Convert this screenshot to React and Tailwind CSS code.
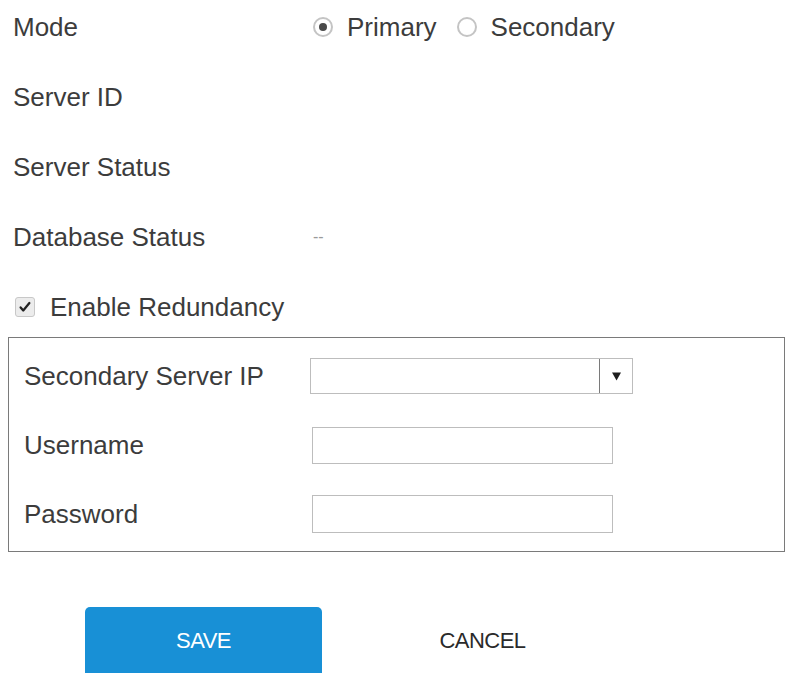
const Radio = ({ checked, label }) => (
  <label className="flex items-center gap-[14px]">
    <span className="flex h-[20px] w-[20px] items-center justify-center rounded-full border-[2px] border-[#c4c4c4] bg-white">
      {checked && <span className="h-[8px] w-[8px] rounded-full bg-[#4a4a4a]" />}
    </span>
    <span>{label}</span>
  </label>
);

const InfoRow = ({ label, children }) => (
  <div className="flex h-[40px] items-center">
    <div className="w-[300px] shrink-0">{label}</div>
    {children}
  </div>
);

const FieldRow = ({ label, children }) => (
  <div className="flex h-[38px] items-center">
    <div className="w-[286px] shrink-0">{label}</div>
    {children}
  </div>
);

export default function App() {
  return (
    <div
      className="min-h-[676px] w-[787px] overflow-hidden bg-white text-[26px] text-[#3c3c3c]"
      style={{ fontFamily: '"Liberation Sans", Arial, sans-serif' }}
    >
      <div className="flex flex-col gap-[30px] pl-[13px] pt-[7px]">
        <InfoRow label="Mode">
          <div className="flex items-center gap-[20px]">
            <Radio checked label="Primary" />
            <Radio label="Secondary" />
          </div>
        </InfoRow>
        <InfoRow label="Server ID" />
        <InfoRow label="Server Status" />
        <InfoRow label="Database Status">
          <span className="text-[16px] text-[#9a9a9a]">--</span>
        </InfoRow>
        <div className="flex h-[40px] items-center gap-[15px] pl-[2px]">
          <span className="flex h-[20px] w-[20px] items-center justify-center rounded-[3px] border border-[#c8c8c8] bg-[#ececec]">
            <svg viewBox="0 0 16 16" className="h-[14px] w-[14px]">
              <path d="M3 8.5l3 3.5 7-8.5" fill="none" stroke="#222" strokeWidth="2.6" strokeLinecap="round" strokeLinejoin="round" />
            </svg>
          </span>
          <span>Enable Redundancy</span>
        </div>
      </div>

      <div className="ml-[8px] mr-[2px] mt-[10px] flex flex-col gap-[31px] border border-[#7a7a7a] pb-[18px] pl-[15px] pt-[19px]">
        <FieldRow label="Secondary Server IP">
          <div className="flex h-[36px] w-[323px] border border-[#bdbdbd] bg-white">
            <div className="flex-1" />
            <div className="flex w-[33px] items-center justify-center border-l border-[#7a7a7a]">
              <svg viewBox="0 0 8 8" className="h-[9px] w-[9px]">
                <path d="M0 0.5h8L4 7.5z" fill="#1e1e1e" />
              </svg>
            </div>
          </div>
        </FieldRow>
        <FieldRow label="Username">
          <input type="text" className="ml-[2px] h-[37px] w-[301px] border border-[#bdbdbd] bg-white outline-none" />
        </FieldRow>
        <FieldRow label="Password">
          <input type="password" className="ml-[2px] h-[38px] w-[301px] border border-[#bdbdbd] bg-white outline-none" />
        </FieldRow>
      </div>

      <div className="mt-[55px] flex gap-[42px] pl-[85px]">
        <button className="h-[66px] w-[237px] rounded-t-[5px] bg-[#1890d6] text-[22px] tracking-tight text-white">
          SAVE
        </button>
        <button className="h-[66px] w-[237px] text-[22px] tracking-tight text-[#2a2a2a]">
          CANCEL
        </button>
      </div>
    </div>
  );
}
